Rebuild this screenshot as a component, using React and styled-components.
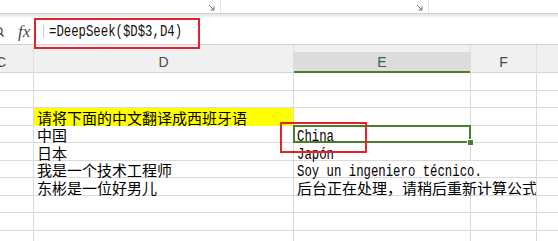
import styled, { createGlobalStyle } from "styled-components";

const columns = [
    { key: "C", width: 65 },
    { key: "D", width: 260 },
    { key: "E", width: 177, selected: true },
    { key: "F", width: 66 },
    { key: "G", width: 66 },
];

const rows = [
    { h: 18 },
    { h: 17 },
    { h: 18, d: "请将下面的中文翻译成西班牙语", mark: true },
    { h: 17, d: "中国", e: "China", active: true },
    { h: 18, d: "日本", e: "Japón" },
    { h: 17, d: "我是一个技术工程师", e: "Soy un ingeniero técnico.", spill: true },
    { h: 18, d: "东彬是一位好男儿", e: "后台正在处理，请稍后重新计算公式", spill: true, cjk: true },
    { h: 17 },
    { h: 18 },
    { h: 17 },
];

const Launcher = () => (
    <svg width="7" height="7" viewBox="0 0 7 7">
        <path d="M1 1 L6 6 M6 2.5 V6 H2.5" stroke="#6b6b6b" strokeWidth="1" fill="none" />
    </svg>
);

export default function App() {
    const template = [28, ...rows.map((r) => r.h)].map((h) => `${h}px`).join(" ");

    return (
        <Page>
            <GlobalStyle />
            <Ribbon>
                <RibbonGroup $width={221}><Launcher /></RibbonGroup>
                <RibbonGroup $width={208}><Launcher /></RibbonGroup>
            </Ribbon>
            <RibbonShadow />
            <FormulaBar>
                <SearchGlyph>
                    <svg width="10" height="12" viewBox="0 0 10 12">
                        <circle cx="4.5" cy="5" r="3.6" stroke="#333" strokeWidth="1.2" fill="none" />
                        <path d="M7 7.6 L9.5 10.5" stroke="#333" strokeWidth="1.3" />
                    </svg>
                </SearchGlyph>
                <FxLabel>fx</FxLabel>
                <BarDivider />
                <FormulaText>=DeepSeek($D$3,D4)</FormulaText>
            </FormulaBar>

            <Sheet $rows={template}>
                {columns.map((c) => (
                    <HeaderCell key={c.key}>
                        <HeaderFace $selected={c.selected}>{c.key}</HeaderFace>
                    </HeaderCell>
                ))}
                {rows.map((r, i) => [
                    <Cell key={`c${i}`} />,
                    <Cell key={`d${i}`} $mark={r.mark}>{r.d}</Cell>,
                    <Cell key={`e${i}`} $spill={r.spill} $active={r.active}>
                        {r.e && (r.cjk ? r.e : <Mono>{r.e}</Mono>)}
                    </Cell>,
                    <Cell key={`f${i}`} />,
                    <Cell key={`g${i}`} />,
                ])}
            </Sheet>

            <Callout $x={34} $y={18} $w={166} $h={31} />
            <Callout $x={280} $y={122} $w={87} $h={31} />
        </Page>
    );
}



// STYLING
const GlobalStyle = createGlobalStyle`
    html, body {
        margin: 0;
        background: #ffffff;
        overflow: hidden;
    }
    body {
        font-family: "Noto Sans CJK SC", "Noto Sans", sans-serif;
    }
`;

const Page = styled.div`
    position: relative;
    width: 558px;
    height: 241px;
    overflow: hidden;
    background: #ffffff;
`;

const Ribbon = styled.div`
    display: flex;
    height: 13px;
    background: #ffffff;
    border-bottom: 1px solid #d2d2d2;
`;

const RibbonGroup = styled.div`
    width: ${(p) => p.$width}px;
    box-sizing: border-box;
    display: flex;
    align-items: flex-end;
    justify-content: flex-end;
    padding: 0 5px 2px 0;
    border-right: 1px solid #e2e2e2;
`;

const RibbonShadow = styled.div`
    height: 3px;
    background: linear-gradient(#e4e4e4, #f4f4f4);
`;

const FormulaBar = styled.div`
    display: flex;
    align-items: center;
    height: 28px;
    padding-top: 2px;
    box-sizing: border-box;
    background: #ffffff;
    border-bottom: 1px solid #d0d0d0;
`;

const SearchGlyph = styled.div`
    display: flex;
    margin-left: -6px;
    width: 10px;
`;

const FxLabel = styled.span`
    margin-left: 14px;
    font-family: "Liberation Serif", serif;
    font-style: italic;
    font-size: 17px;
    color: #4a4a4a;
    line-height: 1;
`;

const BarDivider = styled.div`
    width: 1px;
    height: 13px;
    margin-left: 13px;
    background: #c8c8c8;
`;

const FormulaText = styled.span`
    display: inline-block;
    margin-left: 5px;
    font-family: "Liberation Mono", monospace;
    font-size: 16px;
    color: #111111;
    transform: scaleX(0.77);
    transform-origin: left center;
    white-space: nowrap;
`;

const Sheet = styled.div`
    display: grid;
    grid-template-columns: ${columns.map((c) => `${c.width}px`).join(" ")};
    grid-template-rows: ${(p) => p.$rows};
    margin-left: -31px;
    width: max-content;
`;

const HeaderCell = styled.div`
    box-sizing: border-box;
    padding-top: 7px;
    background: #f0f0f0;
    border-right: 1px solid #dedede;
    display: flex;
`;

const HeaderFace = styled.div`
    flex: 1;
    display: flex;
    align-items: center;
    justify-content: center;
    font-family: "Liberation Sans", sans-serif;
    font-size: 14px;
    color: ${(p) => (p.$selected ? "#2f6a4a" : "#4a4a4a")};
    background: ${(p) => (p.$selected ? "#dcdcdc" : "#f0f0f0")};
    border-bottom: ${(p) => (p.$selected ? "2px solid #4b7d2e" : "1px solid #d4d4d4")};
`;

const Cell = styled.div`
    position: relative;
    box-sizing: border-box;
    display: flex;
    align-items: flex-end;
    padding: 0 2px 0 3px;
    white-space: nowrap;
    font-family: "Noto Sans CJK SC", sans-serif;
    font-size: 15px;
    line-height: 15px;
    color: #000000;
    background: ${(p) => (p.$mark ? "#ffff00" : "transparent")};
    border-right: 1px solid ${(p) => (p.$spill ? "transparent" : "#dadada")};
    border-bottom: 1px solid ${(p) => (p.$mark ? "#ffff00" : "#dadada")};

    ${(p) => p.$active && `
        &::after {
            content: "";
            position: absolute;
            top: -1px;
            left: -1px;
            right: -1px;
            bottom: -1px;
            border: 2px solid #4b7d2e;
            pointer-events: none;
        }
        &::before {
            content: "";
            position: absolute;
            right: -4px;
            bottom: -4px;
            width: 5px;
            height: 5px;
            background: #4b7d2e;
            border: 1px solid #ffffff;
            z-index: 1;
        }
    `}
`;

const Mono = styled.span`
    display: inline-block;
    font-family: "Liberation Mono", monospace;
    font-size: 16px;
    line-height: 10px;
    transform: scaleX(0.77);
    transform-origin: left bottom;
`;

const Callout = styled.div`
    position: absolute;
    left: ${(p) => p.$x}px;
    top: ${(p) => p.$y}px;
    width: ${(p) => p.$w}px;
    height: ${(p) => p.$h}px;
    box-sizing: border-box;
    border: 2px solid #e3222b;
    pointer-events: none;
`;
